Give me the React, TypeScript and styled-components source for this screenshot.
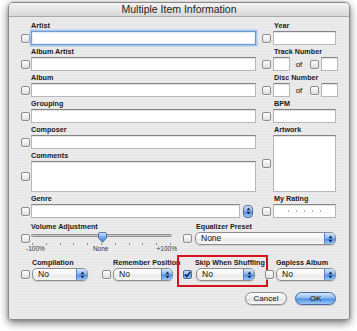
import React from "react";
import styled, { createGlobalStyle, css } from "styled-components";

// Page reset and base font.
const GlobalStyle = createGlobalStyle`
  html, body { margin: 0; padding: 0; background: #fff; }
  body { font-family: "Liberation Sans", Arial, sans-serif; color: #111; }
`;

const AQUA_BLUE = "linear-gradient(#d6e7fc, #8dbaf0 45%, #4f90e4 55%, #9cc8f7)";

const StepArrows = () => (
  <svg width="5" height="8" viewBox="0 0 5 8">
    <polygon points="0.5,3.3 2.5,0.6 4.5,3.3" fill="#1b2748" />
    <polygon points="0.5,4.7 2.5,7.4 4.5,4.7" fill="#1b2748" />
  </svg>
);

const CheckMark = () => (
  <svg width="7" height="7" viewBox="0 0 7 7">
    <polyline points="1,3.6 2.8,5.6 6.4,0.6" fill="none" stroke="#13204a" strokeWidth="1.5" />
  </svg>
);

const Knob = () => (
  <svg width="11" height="11" viewBox="0 0 11 11">
    <defs>
      <linearGradient id="knob" x1="0" y1="0" x2="0" y2="1">
        <stop offset="0" stopColor="#d9e9fc" />
        <stop offset="0.5" stopColor="#74a9ec" />
        <stop offset="1" stopColor="#3d7fd8" />
      </linearGradient>
    </defs>
    <path d="M1.5 2 Q1.5 0.5 3 0.5 H8 Q9.5 0.5 9.5 2 V6 L5.5 10.3 L1.5 6 Z" fill="url(#knob)" stroke="#35609e" strokeWidth="0.8" />
  </svg>
);

export default function App() {
  const ticks = Array.from({ length: 11 });
  return (
    <>
      <GlobalStyle />
      <Screen>
        <Window>
          <TitleBar>Multiple Item Information</TitleBar>
          <Body>
            <Upper>
              {/* Left column of text fields */}
              <Column $w={235}>
                <Block>
                  <Label $indent={10}>Artist</Label>
                  <Row>
                    <Check />
                    <TextBox $focused />
                  </Row>
                </Block>
                <Block>
                  <Label $indent={10}>Album Artist</Label>
                  <Row>
                    <Check />
                    <TextBox />
                  </Row>
                </Block>
                <Block>
                  <Label $indent={10}>Album</Label>
                  <Row>
                    <Check />
                    <TextBox />
                  </Row>
                </Block>
                <Block>
                  <Label $indent={10}>Grouping</Label>
                  <Row>
                    <Check />
                    <TextBox />
                  </Row>
                </Block>
                <Block>
                  <Label $indent={10}>Composer</Label>
                  <Row>
                    <Check />
                    <TextBox />
                  </Row>
                </Block>
                <Block>
                  <Label $indent={10}>Comments</Label>
                  <Row>
                    <Check />
                    <TextBox $h={31} />
                  </Row>
                </Block>
                <Block>
                  <Label $indent={10}>Genre</Label>
                  <Row>
                    <Check />
                    <TextBox />
                    <Stepper>
                      <StepArrows />
                    </Stepper>
                  </Row>
                </Block>
              </Column>

              {/* Right column */}
              <Column $w={74}>
                <Block>
                  <Label $indent={12}>Year</Label>
                  <Row $gap={2}>
                    <Check />
                    <TextBox />
                  </Row>
                </Block>
                <Block>
                  <Label $indent={12}>Track Number</Label>
                  <Row $gap={2}>
                    <Check />
                    <TextBox $w={17} />
                    <Of>of</Of>
                    <Check />
                    <TextBox $w={17} />
                  </Row>
                </Block>
                <Block>
                  <Label $indent={12}>Disc Number</Label>
                  <Row $gap={2}>
                    <Check />
                    <TextBox $w={17} />
                    <Of>of</Of>
                    <Check />
                    <TextBox $w={17} />
                  </Row>
                </Block>
                <Block>
                  <Label $indent={12}>BPM</Label>
                  <Row $gap={2}>
                    <Check />
                    <TextBox />
                  </Row>
                </Block>
                <Block>
                  <Label $indent={12}>Artwork</Label>
                  <Row $gap={2}>
                    <Check />
                    <TextBox $h={57} />
                  </Row>
                </Block>
                <Block>
                  <Label $indent={12}>My Rating</Label>
                  <Row $gap={2}>
                    <Check />
                    <TextBox>
                      <Dots>
                        {Array.from({ length: 5 }).map((_, i) => (
                          <Dot key={i} />
                        ))}
                      </Dots>
                    </TextBox>
                  </Row>
                </Block>
              </Column>
            </Upper>

            {/* Volume + equalizer */}
            <MidRow>
              <Block $w={157}>
                <Label $indent={10}>Volume Adjustment</Label>
                <Row $align="flex-start">
                  <Check $top={2} />
                  <Slider>
                    <Track>
                      <KnobHolder style={{ left: "50%" }}>
                        <Knob />
                      </KnobHolder>
                    </Track>
                    <Ticks>
                      {ticks.map((_, i) => (
                        <Tick key={i} />
                      ))}
                    </Ticks>
                    <TickLabels>
                      <span>-100%</span>
                      <span>None</span>
                      <span>+100%</span>
                    </TickLabels>
                  </Slider>
                </Row>
              </Block>
              <Block $grow $ml={5}>
                <Label $indent={13}>Equalizer Preset</Label>
                <Row $gap={3}>
                  <Check />
                  <Popup>
                    <PopupText>None</PopupText>
                    <PopupCap>
                      <StepArrows />
                    </PopupCap>
                  </Popup>
                </Row>
              </Block>
            </MidRow>

            {/* Bottom popups */}
            <PopupRow>
              <Block $w={67}>
                <Label $indent={11}>Compilation</Label>
                <Row $gap={2}>
                  <Check />
                  <Popup>
                    <PopupText>No</PopupText>
                    <PopupCap>
                      <StepArrows />
                    </PopupCap>
                  </Popup>
                </Row>
              </Block>
              <Block $w={71} $ml={14}>
                <Label $indent={11}>Remember Position</Label>
                <Row $gap={2}>
                  <Check />
                  <Popup>
                    <PopupText>No</PopupText>
                    <PopupCap>
                      <StepArrows />
                    </PopupCap>
                  </Popup>
                </Row>
              </Block>
              <Block $w={72} $ml={10} $highlight>
                <Label $indent={12}>Skip When Shuffling</Label>
                <Row $gap={4}>
                  <Check $on>
                    <CheckMark />
                  </Check>
                  <Popup>
                    <PopupText>No</PopupText>
                    <PopupCap>
                      <StepArrows />
                    </PopupCap>
                  </Popup>
                </Row>
              </Block>
              <Block $w={71} $ml={10}>
                <Label $indent={11}>Gapless Album</Label>
                <Row $gap={2}>
                  <Check />
                  <Popup>
                    <PopupText>No</PopupText>
                    <PopupCap>
                      <StepArrows />
                    </PopupCap>
                  </Popup>
                </Row>
              </Block>
            </PopupRow>

            <ButtonRow>
              <PushButton $w={42}>Cancel</PushButton>
              <PushButton $w={41} $primary>
                OK
              </PushButton>
            </ButtonRow>
          </Body>
        </Window>
      </Screen>
    </>
  );
}

// Styled Components

const Screen = styled.div`
  width: 357px;
  height: 331px;
  padding: 2px 0 0 8px;
  box-sizing: border-box;
  overflow: hidden;
`;

const Window = styled.div`
  width: 342px;
  height: 318px;
  box-sizing: border-box;
  border: 1px solid #8a8a8a;
  border-radius: 5px 5px 3px 3px;
  background: repeating-linear-gradient(#ececec 0 1px, #e6e6e6 1px 2px);
  box-shadow: 0 3px 8px rgba(0, 0, 0, 0.55), 0 0 2px rgba(0, 0, 0, 0.25);
  display: flex;
  flex-direction: column;
  overflow: hidden;
`;

const TitleBar = styled.div`
  flex: none;
  height: 13px;
  background: linear-gradient(#f3f3f3, #d8d8d8);
  border-bottom: 1px solid #a9a9a9;
  font-size: 10.5px;
  line-height: 13px;
  text-align: center;
  color: #1e1e1e;
`;

const Body = styled.div`
  flex: 1;
  padding: 3px 13px 0 12px;
  display: flex;
  flex-direction: column;
`;

const Upper = styled.div`
  display: flex;
  gap: 6px;
`;

const Column = styled.div<{ $w: number }>`
  width: ${({ $w }) => $w}px;
  display: flex;
  flex-direction: column;
  gap: 1px;
`;

const Block = styled.div<{ $w?: number; $ml?: number; $grow?: boolean; $highlight?: boolean }>`
  position: relative;
  display: flex;
  flex-direction: column;
  flex: ${({ $grow, $w }) => ($grow ? 1 : $w ? "none" : "initial")};
  width: ${({ $w }) => ($w ? `${$w}px` : "auto")};
  margin-left: ${({ $ml }) => $ml ?? 0}px;

  ${({ $highlight }) =>
    $highlight &&
    css`
      &::after {
        content: "";
        position: absolute;
        top: -2px;
        left: -6px;
        right: -13px;
        bottom: -6px;
        border: 2px solid #d6121c;
        pointer-events: none;
      }
    `}
`;

const Label = styled.div<{ $indent: number }>`
  height: 11px;
  line-height: 11px;
  padding-left: ${({ $indent }) => $indent}px;
  font-size: 7.2px;
  font-weight: bold;
  color: #1a1a1a;
  white-space: nowrap;
`;

const Row = styled.div<{ $gap?: number; $align?: string }>`
  display: flex;
  align-items: ${({ $align }) => $align ?? "center"};
  gap: ${({ $gap }) => $gap ?? 1}px;
`;

const TextBox = styled.div<{ $h?: number; $w?: number; $focused?: boolean }>`
  box-sizing: border-box;
  height: ${({ $h }) => $h ?? 14}px;
  flex: ${({ $w }) => ($w ? "none" : 1)};
  width: ${({ $w }) => ($w ? `${$w}px` : "auto")};
  background: #fff;
  border: 1px solid #b7b7b7;
  border-top-color: #848484;
  box-shadow: inset 0 1px 0 #e4e4e4;
  display: flex;
  align-items: center;
  justify-content: center;

  ${({ $focused }) =>
    $focused &&
    css`
      border-color: #6d9ad4;
      box-shadow: 0 0 0 1.5px #a8c7ee, inset 0 0 0 1px #e2edfa;
    `}
`;

const Check = styled.div<{ $on?: boolean; $top?: number }>`
  flex: none;
  width: 9px;
  height: 9px;
  box-sizing: border-box;
  margin-top: ${({ $top }) => $top ?? 0}px;
  border: 1px solid #8b8b8b;
  border-radius: 2px;
  background: linear-gradient(#ffffff, #dedede);
  box-shadow: 0 1px 0 rgba(255, 255, 255, 0.6);
  display: flex;
  align-items: center;
  justify-content: center;

  ${({ $on }) =>
    $on &&
    css`
      border-color: #47689a;
      background: ${AQUA_BLUE};
    `}
`;

const Of = styled.span`
  flex: none;
  width: 12px;
  margin: 0 3px 0 1px;
  text-align: center;
  font-size: 8px;
  color: #111;
`;

const Stepper = styled.div`
  flex: none;
  width: 10px;
  height: 13px;
  box-sizing: border-box;
  margin: 0 3px 0 2px;
  border: 1px solid #4b6fa6;
  border-radius: 4px;
  background: ${AQUA_BLUE};
  display: flex;
  align-items: center;
  justify-content: center;
`;

const Dots = styled.div`
  display: flex;
  gap: 6.5px;
`;

const Dot = styled.span`
  width: 1.5px;
  height: 1.5px;
  border-radius: 50%;
  background: #a8a8a8;
`;

const MidRow = styled.div`
  display: flex;
  margin-top: 3px;
`;

const Slider = styled.div`
  width: 141px;
  display: flex;
  flex-direction: column;
`;

const Track = styled.div`
  position: relative;
  height: 11px;

  &::before {
    content: "";
    position: absolute;
    left: 0;
    right: 0;
    top: 2px;
    height: 3px;
    box-sizing: border-box;
    border: 1px solid #8e8e8e;
    border-radius: 2px;
    background: #c9c9c9;
  }
`;

const KnobHolder = styled.div`
  position: absolute;
  top: 0;
  margin-left: -5px;
  line-height: 0;
`;

const Ticks = styled.div`
  display: flex;
  justify-content: space-between;
  padding: 0 1px;
  height: 2px;
`;

const Tick = styled.span`
  width: 1px;
  height: 2px;
  background: #8a8a8a;
`;

const TickLabels = styled.div`
  display: flex;
  justify-content: space-between;
  margin: 0 -5px;
  font-size: 6.5px;
  line-height: 8px;
  color: #333;
`;

const Popup = styled.div`
  flex: 1;
  box-sizing: border-box;
  height: 13px;
  border: 1px solid #8c8c8c;
  border-radius: 5px;
  background: linear-gradient(#ffffff, #f3f3f3 50%, #e6e6e6 51%, #f7f7f7);
  box-shadow: 0 1px 1px rgba(0, 0, 0, 0.12);
  display: flex;
  align-items: stretch;
  overflow: hidden;
`;

const PopupText = styled.span`
  flex: 1;
  padding-left: 5px;
  font-size: 8.5px;
  line-height: 11px;
  color: #111;
  white-space: nowrap;
`;

const PopupCap = styled.span`
  flex: none;
  width: 10px;
  border-left: 1px solid #5e85bd;
  background: ${AQUA_BLUE};
  display: flex;
  align-items: center;
  justify-content: center;
`;

const PopupRow = styled.div`
  display: flex;
  margin-top: 4px;
`;

const ButtonRow = styled.div`
  display: flex;
  justify-content: flex-end;
  gap: 8px;
  margin-top: 11px;
`;

const PushButton = styled.div<{ $w: number; $primary?: boolean }>`
  width: ${({ $w }) => $w}px;
  height: 13px;
  box-sizing: border-box;
  border: 1px solid #8a8a8a;
  border-radius: 7px;
  background: linear-gradient(#fdfdfd, #ededed 50%, #dedede 51%, #f8f8f8);
  box-shadow: 0 1px 1px rgba(0, 0, 0, 0.15);
  font-size: 8px;
  line-height: 11px;
  text-align: center;
  color: #111;

  ${({ $primary }) =>
    $primary &&
    css`
      border-color: #4569a0;
      background: ${AQUA_BLUE};
    `}
`;
